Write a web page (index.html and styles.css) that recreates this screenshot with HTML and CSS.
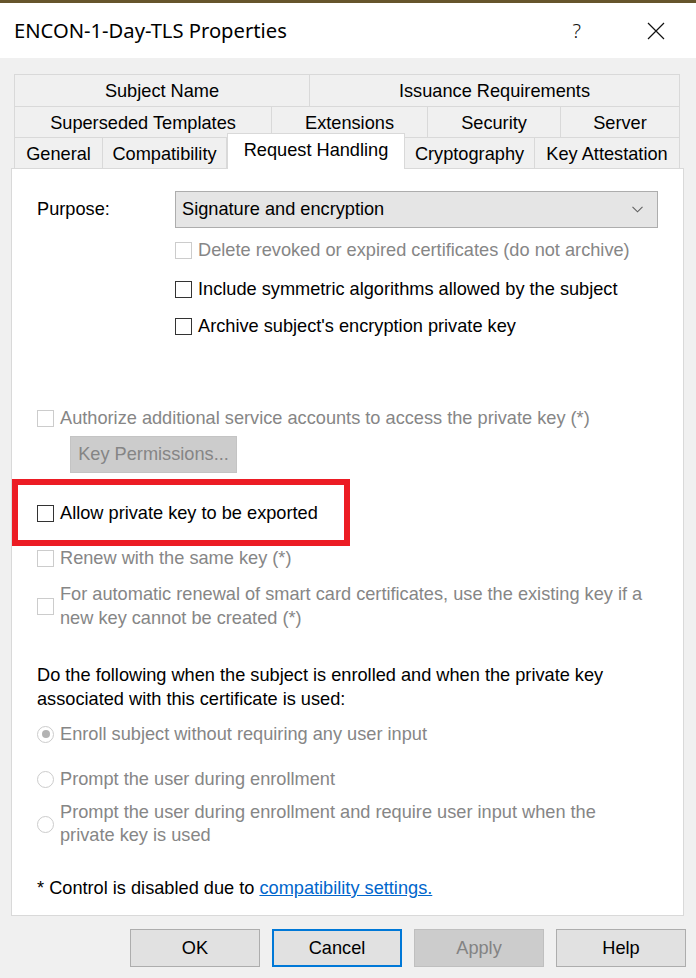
FILE: index.html
```html
<!DOCTYPE html>
<html lang="en">
<head>
<meta charset="utf-8">
<title>ENCON-1-Day-TLS Properties</title>
<link rel="stylesheet" href="styles.css">
</head>
<body>
<div class="window">
  <div class="topline"></div>
  <div class="titlebar">
    <div class="title">ENCON-1-Day-TLS Properties</div>
    <div class="caption-btns">
      <span class="help-glyph">?</span>
      <svg class="close-icon" width="18" height="18" viewBox="0 0 18 18" aria-hidden="true">
        <path d="M1 1 L17 17 M17 1 L1 17" stroke="#111" stroke-width="1.2" fill="none"/>
      </svg>
    </div>
  </div>

  <div class="client">
    <div class="tabs">
      <div class="tabrow row1">
        <div class="tab">Subject Name</div>
        <div class="tab">Issuance Requirements</div>
      </div>
      <div class="tabrow row2">
        <div class="tab">Superseded Templates</div>
        <div class="tab">Extensions</div>
        <div class="tab">Security</div>
        <div class="tab">Server</div>
      </div>
      <div class="tabrow row3">
        <div class="tab">General</div>
        <div class="tab">Compatibility</div>
        <div class="tab selected">Request Handling</div>
        <div class="tab">Cryptography</div>
        <div class="tab">Key Attestation</div>
      </div>
    </div>

    <div class="panel">
      <div class="purpose">
        <span class="purpose-label">Purpose:</span>
        <div class="combo">
          <span>Signature and encryption</span>
          <svg class="chev" width="11" height="7" viewBox="0 0 11 7" aria-hidden="true">
            <path d="M0.5 0.8 L5.5 5.8 L10.5 0.8" stroke="#606060" stroke-width="1.1" fill="none"/>
          </svg>
        </div>
      </div>

      <div class="indent">
        <div class="opt disabled m-delete"><span class="cb"></span><span>Delete revoked or expired certificates (do not archive)</span></div>
        <div class="opt m-include"><span class="cb"></span><span>Include symmetric algorithms allowed by the subject</span></div>
        <div class="opt m-archive"><span class="cb"></span><span>Archive subject's encryption private key</span></div>
      </div>

      <div class="opt disabled m-authorize"><span class="cb"></span><span>Authorize additional service accounts to access the private key (*)</span></div>
      <div class="keyperm-wrap"><div class="btn keyperm">Key Permissions...</div></div>

      <div class="highlight">
        <div class="opt"><span class="cb"></span><span>Allow private key to be exported</span></div>
      </div>

      <div class="opt disabled"><span class="cb"></span><span>Renew with the same key (*)</span></div>
      <div class="opt disabled multi m-auto"><span class="cb"></span><span>For automatic renewal of smart card certificates, use the existing key if a<br>new key cannot be created (*)</span></div>

      <p class="para">Do the following when the subject is enrolled and when the private key<br>associated with this certificate is used:</p>

      <div class="opt disabled m-enroll"><span class="rb checked"></span><span>Enroll subject without requiring any user input</span></div>
      <div class="opt disabled m-prompt"><span class="rb"></span><span>Prompt the user during enrollment</span></div>
      <div class="opt disabled multi tight m-prompt2"><span class="rb"></span><span>Prompt the user during enrollment and require user input when the<br>private key is used</span></div>

      <p class="note">* Control is disabled due to <a class="link" href="#">compatibility settings.</a></p>
    </div>

    <div class="buttons">
      <div class="btn">OK</div>
      <div class="btn focused">Cancel</div>
      <div class="btn disabled-btn">Apply</div>
      <div class="btn">Help</div>
    </div>
  </div>
</div>
</body>
</html>
```

FILE: styles.css
```css
* { box-sizing: border-box; }

html, body {
  margin: 0;
  padding: 0;
}

body {
  width: 696px;
  height: 978px;
  background: #f0f0f0;
  font-family: "Liberation Sans", Arial, sans-serif;
  font-size: 18.2px;
  color: #000;
  overflow: hidden;
}

.window {
  width: 696px;
  height: 978px;
  background: #f0f0f0;
}

.topline {
  height: 3px;
  background: #66552c;
}

.titlebar {
  height: 55px;
  background: #fff;
  display: flex;
  align-items: center;
  justify-content: space-between;
  padding: 0 31px 0 14px;
}

.title {
  font-family: "Noto Sans", "Open Sans", sans-serif;
  font-size: 20.2px;
  color: #000;
  padding-bottom: 2px;
}

.caption-btns {
  display: flex;
  align-items: center;
  gap: 66px;
}

.help-glyph {
  font-family: "Noto Sans", sans-serif;
  font-size: 20px;
  font-weight: 300;
  color: #111;
}

.close-icon { display: block; }

.client {
  padding-top: 16px;
}

/* tabs */
.tabs {
  margin-left: 14px;
  width: 666px;
}

.tabrow {
  display: grid;
}

.row1 { grid-template-columns: 296px 370px; height: 32px; }
.row2 { grid-template-columns: 258px 156px 133px 119px; height: 31px; }
.row3 { grid-template-columns: 89px 124px 178px 130px 145px; height: 31px; }

.tab {
  display: flex;
  align-items: center;
  justify-content: center;
  border-top: 1px solid #d9d9d9;
  border-right: 1px solid #d9d9d9;
  background: #f0f0f0;
  white-space: nowrap;
  padding-top: 2px;
}

.tab:first-child { border-left: 1px solid #d9d9d9; }

.tab.selected {
  background: #fff;
  border-left: 1px solid #d9d9d9;
  margin-top: -4px;
  margin-bottom: -1px;
  position: relative;
  z-index: 1;
  align-items: flex-start;
  padding-top: 6px;
}

/* panel */
.panel {
  margin-left: 11px;
  width: 673px;
  height: 748px;
  background: #fff;
  border: 1px solid #d9d9d9;
  padding: 22px 10px 0 25px;
}

.purpose {
  display: flex;
  align-items: center;
}

.purpose-label {
  width: 138px;
}

.combo {
  width: 483px;
  height: 37px;
  background: #e5e5e5;
  border: 1px solid #adadad;
  display: flex;
  align-items: center;
  justify-content: space-between;
  padding: 0 14px 0 6px;
}

.chev { display: block; }

.indent { padding-left: 138px; }

.opt {
  display: flex;
  align-items: center;
  gap: 6px;
  height: 24px;
  line-height: 24px;
  white-space: nowrap;
}

.opt.multi { height: auto; }
.opt.tight { line-height: 23px; }

.opt.disabled { color: #868686; }

.cb {
  flex: none;
  width: 17px;
  height: 17px;
  border: 1px solid #333;
  background: #fff;
}

.disabled .cb { border-color: #cccccc; }

.rb {
  flex: none;
  width: 17px;
  height: 17px;
  border: 1px solid #333;
  border-radius: 50%;
  background: #fff;
  display: flex;
  align-items: center;
  justify-content: center;
}

.disabled .rb { border-color: #cccccc; }

.rb.checked::after {
  content: "";
  width: 8px;
  height: 8px;
  border-radius: 50%;
  background: #b3b3b3;
}

.m-delete { margin-top: 10px; }
.m-include { margin-top: 15px; }
.m-archive { margin-top: 13px; }
.m-authorize { margin-top: 68px; }

.keyperm-wrap {
  margin-top: 6px;
  padding-left: 33px;
}

.btn {
  width: 130px;
  height: 38px;
  background: #e1e1e1;
  border: 1px solid #adadad;
  display: flex;
  align-items: center;
  justify-content: center;
}

.btn.keyperm {
  width: 167px;
  height: 37px;
  background: #cccccc;
  border-color: #c4c4c4;
  color: #858585;
}

.highlight {
  margin: 6px 0 0 -25px;
  width: 338px;
  border: 6px solid #ec1c24;
  padding: 16px 0 15px 19px;
}

.m-auto { margin-top: 12px; }

.para {
  margin: 33px 0 0;
  line-height: 24px;
}

.m-enroll { margin-top: 11px; }
.m-prompt { margin-top: 21px; }
.m-prompt2 { margin-top: 10px; }

.note {
  margin: 29px 0 0;
  line-height: 24px;
}

.link {
  color: #0066cc;
  text-decoration: underline;
}

/* bottom buttons */
.buttons {
  display: flex;
  justify-content: flex-end;
  gap: 12px;
  padding-right: 10px;
  margin-top: 13px;
}

.btn.focused {
  border: 2px solid #0078d7;
}

.btn.disabled-btn {
  background: #cccccc;
  border-color: #bfbfbf;
  color: #838383;
}
```
